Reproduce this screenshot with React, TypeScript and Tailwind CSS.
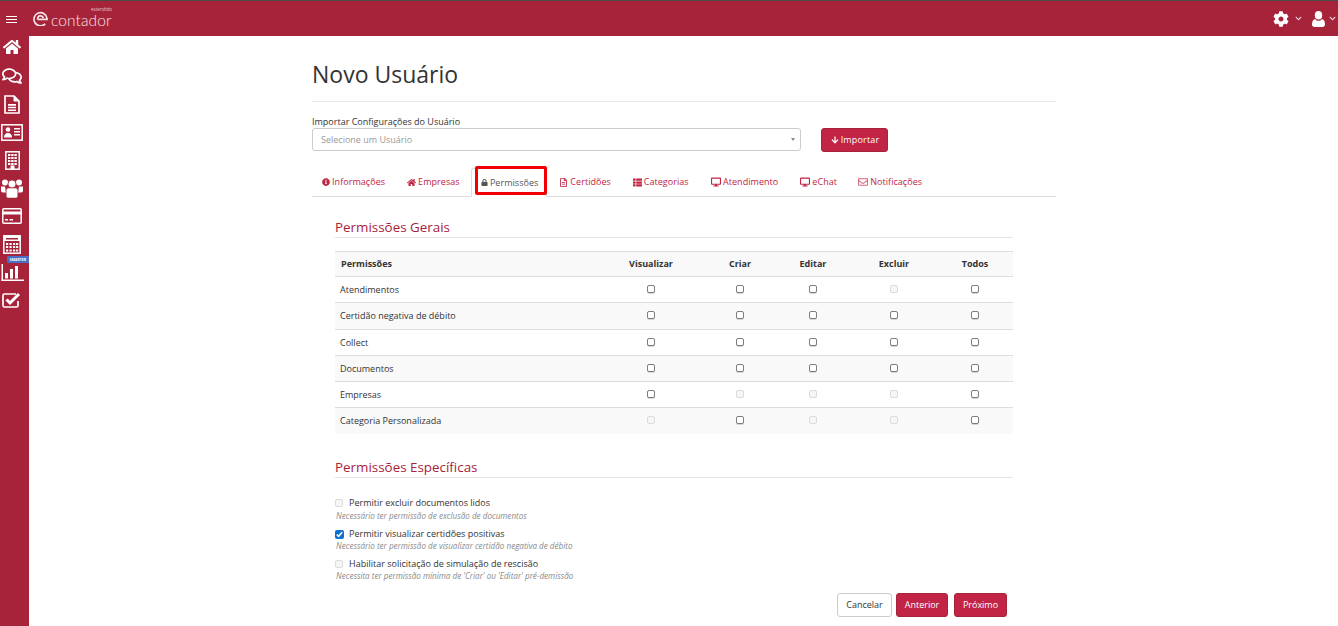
import React from "react";
import { FaHome, FaRegComments, FaRegFileAlt, FaCog, FaChevronDown, FaInfoCircle, FaLock, FaDesktop, FaRegEnvelope, FaArrowDown, FaThList } from "react-icons/fa";

const rows: [string, boolean[]][] = [
  ["Atendimentos", [false, false, false, true, false]],
  ["Certidão negativa de débito", [false, false, false, false, false]],
  ["Collect", [false, false, false, false, false]],
  ["Documentos", [false, false, false, false, false]],
  ["Empresas", [false, true, true, true, false]],
  ["Categoria Personalizada", [true, false, true, true, false]],
];
const heights = ["h-[26px]", "h-[27px]", "h-[26px]", "h-[26px]", "h-[26px]", "h-[26px]"];

function Box({ disabled, flat }: { disabled?: boolean; flat?: boolean }) {
  return (
    <span className={`inline-block w-[8px] h-[8px] rounded-[2px] border align-middle ${flat ? "" : "mb-[2px]"} ${disabled ? "border-[#dcdcdc] bg-[#f6f6f6]" : "border-[#7d7d7d] bg-white shadow-[0_1px_0_#d5d5d5]"}`} />
  );
}

function DocIcon() {
  return (
    <svg viewBox="0 0 16 19" width="16" height="19" fill="none">
      <path d="M1 1h9l5 5v12H1z" stroke="#fff" strokeWidth="1.7" />
      <path d="M10 1v5h5" fill="#fff" stroke="#fff" strokeWidth="1" />
      <path d="M4 9h8v1.800H4zM4 11.800h8v1.500H4zM4 14.400h8v1.500H4z" fill="#fff" />
    </svg>
  );
}

function CardIcon() {
  return (
    <svg viewBox="0 0 22 17" width="22" height="17" fill="none">
      <rect x="0.800" y="0.800" width="20.400" height="15.400" stroke="#fff" strokeWidth="1.500" />
      <circle cx="7" cy="5.500" r="2.300" fill="#fff" />
      <path d="M3 13.500c0-3 1.500-4.500 4-4.500s4 1.500 4 4.500z" fill="#fff" />
      <path d="M13 4h6v1.600h-6zM13 7h6v1.600h-6zM13 10h6v1.600h-6z" fill="#fff" />
    </svg>
  );
}

function BuildingIcon() {
  return (
    <svg viewBox="0 0 15 19" width="15" height="19" fill="none">
      <rect x="0.800" y="0.800" width="13.400" height="17.400" stroke="#fff" strokeWidth="1.500" />
      {[3, 6.200, 9.400].flatMap((x) => [3, 6, 9, 12].map((y) => <rect key={`${x}-${y}`} x={x} y={y} width="2.400" height="2" fill="#fff" />))}
      <rect x="5.500" y="14.500" width="4" height="4" fill="#fff" />
    </svg>
  );
}

function UsersIcon() {
  return (
    <svg viewBox="0 0 22 20" width="22" height="20" fill="#fff">
      <circle cx="4" cy="4.500" r="3" />
      <circle cx="18" cy="4.500" r="3" />
      <path d="M0 8.500h4l1 6H2.500C1 14.500 0 14 0 12.500zM22 8.500h-4l-1 6h2.500c1.500 0 2.500-.5 2.500-2z" />
      <circle cx="11" cy="6" r="4" stroke="#a6233a" strokeWidth="0.800" />
      <path d="M5.200 12.500c0-1.500 1-2.500 2.300-2.500h7c1.300 0 2.300 1 2.300 2.500V18c0 1-.8 2-2 2H7.200c-1.200 0-2-1-2-2z" stroke="#a6233a" strokeWidth="0.500" />
    </svg>
  );
}

function CreditIcon() {
  return (
    <svg viewBox="0 0 20 16" width="20" height="16" fill="none">
      <rect x="0.800" y="0.800" width="18.400" height="14.400" rx="1" stroke="#fff" strokeWidth="1.500" />
      <rect x="1" y="3.500" width="18" height="3" fill="#fff" />
      <path d="M3 11h3v1.500H3zM7.500 11H11v1.500H7.500z" fill="#fff" />
    </svg>
  );
}

function Calc() {
  return (
    <svg viewBox="0 0 18 19" width="18" height="19" fill="none">
      <rect x="0.800" y="0.800" width="16.400" height="17.400" stroke="#fff" strokeWidth="1.500" />
      <rect x="1" y="1" width="16" height="5" fill="#fff" />
      <rect x="3" y="3" width="12" height="1.500" fill="#a6233a" />
      {[3, 6.500, 10, 13].flatMap((x) => [8, 11, 14.500].map((y) => <rect key={`${x}-${y}`} x={x} y={y} width="2.200" height="2" fill="#fff" />))}
    </svg>
  );
}

function Chart() {
  return (
    <svg viewBox="0 0 23 17" width="23" height="17" fill="#fff">
      <rect x="0.500" y="0" width="1.500" height="17" />
      <rect x="0.500" y="15.500" width="22.500" height="1.500" />
      <rect x="4" y="9" width="3" height="5.500" />
      <rect x="9" y="5" width="3" height="9.500" />
      <rect x="14" y="2" width="3" height="12.500" />
    </svg>
  );
}

function CheckIcon() {
  return (
    <svg viewBox="0 0 20 16" width="20" height="16" fill="none">
      <path d="M16 9v4.500a1.500 1.500 0 0 1-1.500 1.500h-12A1.500 1.500 0 0 1 1 13.500v-10A1.500 1.500 0 0 1 2.500 2H14" stroke="#fff" strokeWidth="1.700" />
      <path d="M4.500 7.500l3.500 3.500 9-9" stroke="#fff" strokeWidth="3" />
    </svg>
  );
}

function UserIcon() {
  return (
    <svg viewBox="0 0 13 16" width="13" height="16" fill="#fff">
      <ellipse cx="6.500" cy="4.300" rx="3.700" ry="4.300" />
      <path d="M0 13.500c0-3 1-5 3-5.500 1 1.300 2.200 1.800 3.500 1.800S9 9.300 10 8c2 .5 3 2.500 3 5.500 0 1.500-1 2.500-2.500 2.500h-8C1 16 0 15 0 13.500z" />
    </svg>
  );
}

function Logo() {
  return (
    <div className="relative flex items-start h-[22px] w-[79px] pt-[3px]">
      <svg viewBox="0 0 16 16" width="15" height="15" fill="none" stroke="#f6e4e7" strokeWidth="1.800">
        <path d="M13 13.700A7 7 0 1 1 15 8v1H5" />
        <path d="M5 9a3 3 0 0 1 6-1.500" />
      </svg>
      <span className="ml-[3px] mt-[-1px] text-[15.5px] leading-[20px] tracking-[0.1px] font-light text-[#f6e4e7] font-['Lato',sans-serif]">contador</span>
      <span className="absolute right-0 top-[-1px] text-[4.500px] leading-[5px] text-[#e9c3ca]">estendido</span>
    </div>
  );
}

const tabs = [
  ["Informações", <FaInfoCircle size={8} />, "pl-[10px] pr-[11px]"],
  ["Empresas", <FaHome size={9} />, "pl-[11px] pr-[11px]"],
];

const tabsRight = [
  ["Certidões", <FaRegFileAlt size={9} />, "w-[73px]"],
  ["Categorias", <FaThList size={9} />, "w-[78px]"],
  ["Atendimento", <FaDesktop size={10} />, "w-[90px]"],
  ["eChat", <FaDesktop size={10} />, "w-[58px]"],
  ["Notificações", <FaRegEnvelope size={10} className="opacity-70" />, "w-[85px]"],
];

const hint = "text-[8.100px] leading-[10px] italic text-[#8a8a8a] pl-[1px]";

export default function App() {
  return (
    <div className="min-h-[626px] h-[626px] overflow-hidden bg-white text-[#333] font-['Open_Sans',sans-serif] flex flex-col">
      <header className="h-[36px] shrink-0 bg-[#a6233a] border-t border-[#4a4a4a] flex items-center justify-between pl-[6px] pr-[2px]">
        <div className="flex items-center gap-[16px]">
          <div className="flex flex-col gap-[2px] w-[11px] mt-[1px]">
            <span className="h-[1px] bg-white" />
            <span className="h-[1px] bg-white" />
            <span className="h-[1px] bg-white" />
          </div>
          <Logo />
        </div>
        <div className="flex items-center text-white">
          <FaCog size={16} />
          <FaChevronDown size={7} className="ml-[6px] text-[#f5dfe3]" />
          <span className="ml-[10px]"><UserIcon /></span>
          <FaChevronDown size={7} className="ml-[4px] text-[#f5dfe3]" />
        </div>
      </header>
      <div className="flex flex-1 min-h-0">
        <aside className="w-[29px] shrink-0 bg-[#a6233a] flex flex-col items-center pr-[5px] text-white">
          <div className="h-[26px] pb-[4px] flex items-center"><FaHome size={18} /></div>
          <div className="h-[28px] flex items-center"><FaRegComments size={20} /></div>
          <div className="h-[28px] flex items-center"><DocIcon /></div>
          <div className="h-[28px] flex items-center"><CardIcon /></div>
          <div className="h-[28px] flex items-center"><BuildingIcon /></div>
          <div className="h-[28px] flex items-center"><UsersIcon /></div>
          <div className="h-[28px] flex items-center"><CreditIcon /></div>
          <div className="h-[28px] flex items-center"><Calc /></div>
          <div className="relative h-[28px] w-[29px] shrink-0 self-start flex items-center justify-start pl-[1px]">
            <Chart />
            <span className="absolute right-0 top-[-2px] w-[22px] h-[7px] bg-[#4a6fc4] rounded-l-[1px] text-[3.500px] leading-[7px] font-bold text-white text-center">SMARTER</span>
          </div>
          <div className="h-[27px] flex items-center"><CheckIcon /></div>
        </aside>
        <main className="flex-1 min-w-0">
          <div className="w-[744px] ml-[283px]">
            <h1 className="text-[23px] leading-[33px] font-normal text-[#333] pt-[22px] h-[66px] border-b border-[#e9e9e9]">Novo Usuário</h1>
            <label className="block mt-[14px] text-[9px] leading-[12px] text-[#333]">Importar Configurações do Usuário</label>
            <div className="flex items-start">
              <div className="w-[489px] h-[23px] border border-[#cccccc] rounded-[3px] flex items-center justify-between pl-[8px] pr-[5px]">
                <span className="text-[9px] text-[#999]">Selecione um Usuário</span>
                <span className="w-0 h-0 border-x-[2px] border-x-transparent border-t-[3px] border-t-[#888]" />
              </div>
              <button className="ml-[20px] w-[67px] h-[24px] bg-[#c12444] border border-[#a6233a] rounded-[3px] text-white text-[9px] flex items-center justify-center gap-[2px] pl-[1px] tracking-[0.16px]">
                <FaArrowDown size={8} /> Importar
              </button>
            </div>
            <nav className="flex items-end h-[29px] mt-[16px] border-b border-[#dddddd] text-[#c12444] text-[9px] tracking-[0.05px]">
              {tabs.map(([t, icon, pad]) => (
                <a key={t as string} className={`flex items-center gap-[2px] h-[28px] ${pad as string}`}>{icon}{t}</a>
              ))}
              <div className="relative flex items-center justify-center gap-[2px] w-[76px] h-[29px] mr-[2px] pl-[2px] border border-[#dddddd] border-b-white rounded-t-[3px] bg-white text-[#555] mb-[-1px]">
                <FaLock size={7} /> Permissões
                <span className="absolute left-[3px] top-[-3px] w-[72px] h-[29px] border-[3px] border-[#f00000] rounded-[2px]" />
              </div>
              {tabsRight.map(([t, icon, w]) => (
                <a key={t as string} className={`flex items-center justify-center gap-[2px] h-[28px] ${w as string}`}>{icon}{t}</a>
              ))}
            </nav>
            <section className="ml-[23px] w-[678px]">
              <h2 className="mt-[21px] h-[20px] text-[13.400px] leading-[19px] text-[#a6233a] font-normal border-b border-[#e5e5e5]">Permissões Gerais</h2>
              <table className="mt-[13px] w-[678px] table-fixed border-collapse text-[9px] text-[#333]">
                <colgroup>
                  <col className="w-[262px]" /><col className="w-[108px]" /><col className="w-[70px]" /><col className="w-[76px]" /><col className="w-[86px]" /><col className="w-[76px]" />
                </colgroup>
                <thead>
                  <tr className="h-[25px] border-y border-[#dddddd] bg-[#f9f9f9]">
                    <th className="text-left font-bold pl-[6px]">Permissões</th>
                    {["Visualizar", "Criar", "Editar", "Excluir", "Todos"].map((h) => <th key={h} className="text-center font-bold">{h}</th>)}
                  </tr>
                </thead>
                <tbody>
                  {rows.map(([name, dis], i) => (
                    <tr key={name} className={`${heights[i]} ${i < 5 ? "border-b border-[#dddddd]" : ""} ${i % 2 === 1 ? "bg-[#f9f9f9]" : "bg-white"}`}>
                      <td className="pl-[5px]">{name}</td>
                      {dis.map((d, j) => <td key={j} className="text-center leading-[9px]"><Box disabled={d} /></td>)}
                    </tr>
                  ))}
                </tbody>
              </table>
              <h2 className="mt-[24px] h-[20px] text-[13.400px] leading-[19px] text-[#a6233a] font-normal border-b border-[#e5e5e5]">Permissões Específicas</h2>
              <div className="mt-[19px] text-[9px]">
                <div className="flex items-center gap-[6px] h-[12px]"><Box disabled flat /><span>Permitir excluir documentos lidos</span></div>
                <p className={`mt-[2px] h-[16px] ${hint}`}>Necessário ter permissão de exclusão de documentos</p>
                <div className="flex items-center gap-[5px] h-[13px] mt-[1px]">
                  <span className="w-[9px] h-[9px] rounded-[2px] bg-[#0d6fd0] flex items-center justify-center">
                    <svg viewBox="0 0 10 10" width="9" height="9" fill="none" stroke="#fff" strokeWidth="1.800"><path d="M2 5l2 2 4-4.500" /></svg>
                  </span>
                  <span>Permitir visualizar certidões positivas</span>
                </div>
                <p className={`h-[17px] ${hint}`}>Necessário ter permissão de visualizar certidão negativa de débito</p>
                <div className="flex items-center gap-[6px] h-[12px]"><Box disabled flat /><span>Habilitar solicitação de simulação de rescisão</span></div>
                <p className={`mt-[1px] h-[10px] ${hint}`}>Necessita ter permissão mínima de 'Criar' ou 'Editar' pré-demissão</p>
              </div>
              <div className="flex justify-end mt-[12px] pr-[6px] text-[9px]">
                <button className="w-[55px] h-[24px] mr-[4px] bg-white border border-[#cccccc] rounded-[3px] text-[#333]">Cancelar</button>
                <button className="w-[52px] h-[24px] mr-[6px] bg-[#c12444] border border-[#a6233a] rounded-[3px] text-white">Anterior</button>
                <button className="w-[53px] h-[24px] bg-[#c12444] border border-[#a6233a] rounded-[3px] text-white">Próximo</button>
              </div>
            </section>
          </div>
        </main>
      </div>
    </div>
  );
}
